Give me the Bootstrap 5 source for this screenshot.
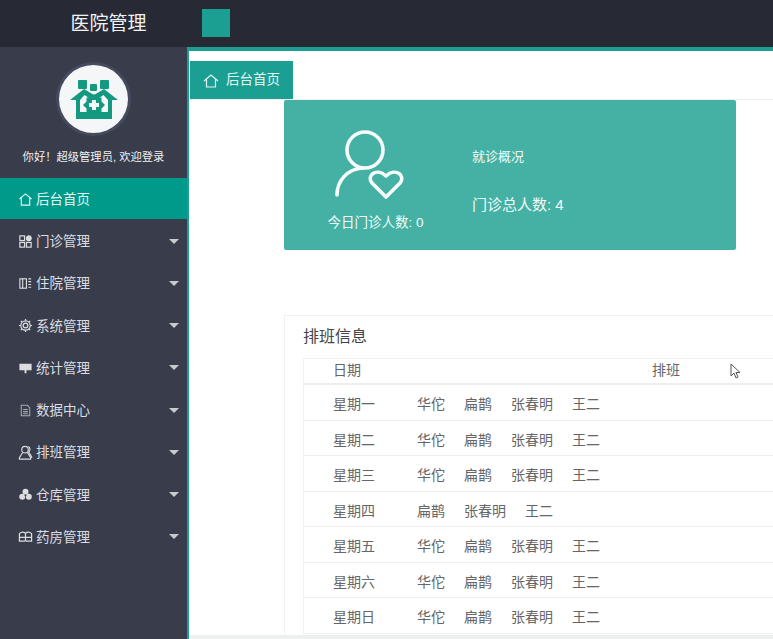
<!DOCTYPE html>
<html lang="zh">
<head>
<meta charset="utf-8">
<title>医院管理</title>
<link href="https://cdn.jsdelivr.net/npm/bootstrap@5.3.0/dist/css/bootstrap.min.css" rel="stylesheet">
<style>
html,body{height:639px;overflow:hidden;}
body{font-family:"Liberation Sans","Noto Sans CJK SC",sans-serif;font-size:14px;background:#fff;}
.shell{width:773px;height:639px;overflow:hidden;}
.topbar{height:47px;background:#272a35;flex:none;padding-bottom:1px;}
.brand{width:187px;color:#f1f2f3;font-size:19px;padding-left:30px;text-align:center;line-height:45px;}
.tsquare{width:28px;height:28px;background:#1a9f92;margin-left:15px;}
.lower{height:592px;}
.side{width:189px;flex:none;background:#393c4a;border-right:2px solid #1a9f92;color:#dfe0e4;}
.avatar-zone{height:131px;padding-top:15px;}
.avatar{width:75px;height:74px;border-radius:50%;background:#f5f6f7;border:3px solid #454a5e;}
.hello{font-size:11.3px;color:#eef0f2;margin-top:13px;line-height:16px;white-space:nowrap;}
.mitem{height:42.25px;padding-left:18px;padding-right:8px;padding-top:4px;font-size:13.5px;color:#dcdde1;}
.mitem.on{height:41px;background:#009a8a;color:#e3f5f2;}
.mitem svg{width:15px;height:15px;margin-right:3px;margin-bottom:2px;flex:none;}
.caret-d{width:0;height:0;margin-bottom:2px;border-left:5.5px solid transparent;border-right:5.5px solid transparent;border-top:5px solid #c9cad0;}
.main{min-width:0;border-top:4px solid #1a9f92;position:relative;}
.tabrow{height:49px;padding-top:10px;padding-left:1px;border-bottom:1px solid #eef0f0;}
.tab{width:103px;height:38px;padding-top:1px;background:#1a9f92;color:#e6f6f4;font-size:13.5px;}
.tab svg{width:16px;height:16px;margin-right:7px;}
.panel{margin-left:95px;width:452px;height:150px;background:#44b1a4;border-radius:2px;color:#f2fbfa;}
.pleft{width:179px;padding-top:30px;font-size:13.5px;line-height:20px;}
.pleft svg{width:72px;height:72px;display:block;margin:0 0 11px 51px;}
.pright{padding-left:9px;padding-top:48px;}
.pright .t1{font-size:13px;line-height:18px;margin-bottom:29px;}
.pright .t2{font-size:15px;line-height:20px;}
.sched{margin-left:95px;margin-top:65px;border:1px solid #f1f1f1;border-right:0;border-bottom:0;padding:0 0 0 18px;color:#555;height:330px;}
.stitle{font-size:16px;line-height:20px;padding-top:11px;height:42px;color:#444;}
.stable{font-size:14px;color:#666;}
.thr{height:27px;border:1px solid #f2f2f2;border-bottom:2px solid #eee;border-right:0;padding-left:29px;line-height:22px;position:relative;}
.thr .dt{width:319px;}
.trw{height:35.5px;border-bottom:1px solid #efefef;border-left:1px solid #f2f2f2;padding-left:29px;padding-top:5px;align-items:center;}
.trw .dt{width:84px;}
.trw .nm{margin-right:19px;}
.ptr{position:absolute;left:426px;top:4px;width:12px;height:16px;}
.footline{position:absolute;left:0;right:0;bottom:0;height:4px;background:#eef0f0;}
</style>
</head>
<body>
<div class="shell d-flex flex-column">
  <div class="topbar d-flex align-items-center">
    <div class="brand">医院管理</div>
    <div class="tsquare"></div>
  </div>
  <div class="lower d-flex">
    <div class="side">
      <div class="avatar-zone text-center">
        <div class="avatar mx-auto d-flex align-items-center justify-content-center">
          <svg width="48" height="39" viewBox="0 0 48 39" fill="#12997f">
            <rect x="8" y="0" width="9" height="9" rx="1"/><rect x="30" y="0" width="9" height="9" rx="1"/><rect x="20" y="4" width="7" height="7" rx="1"/>
            <path d="M0 20 14 9l10 6 10-6 14 11h-6v19H6V20z"/>
            <path d="M10 20l4.500-5 4.500 3v14h-9zM38 20l-4.500-5-4.500 3v14h9z" fill="#f5f6f7"/>
            <path d="M24 14l3.500 3.500h4v4L35 25l-3.500 3.500v4h-4L24 36l-3.500-3.500h-4v-4L13 25l3.500-3.500v-4h4z"/>
            <path d="M22 20h4v3h3v4h-3v3h-4v-3h-3v-4h3z" fill="#f5f6f7"/>
          </svg>
        </div>
        <div class="hello">你好！超级管理员, 欢迎登录</div>
      </div>
      <div class="mitem on d-flex align-items-center"><svg viewBox="0 0 16 16" fill="none" stroke="currentColor" stroke-width="1.2"><path d="M1.5 7.5 8 2l6.500 5.500M3.500 6.500V14h9V6.500"/></svg>后台首页</div>
      <div class="mitem d-flex align-items-center"><svg viewBox="0 0 16 16" fill="none" stroke="currentColor" stroke-width="1.300"><rect x="2" y="2" width="5" height="5"/><rect x="2" y="9" width="5" height="5"/><rect x="9" y="9" width="5" height="5"/><circle cx="11.500" cy="4.500" r="2.500" fill="currentColor"/></svg>门诊管理<span class="caret-d ms-auto"></span></div>
      <div class="mitem d-flex align-items-center"><svg viewBox="0 0 16 16" fill="none" stroke="currentColor" stroke-width="1.200"><rect x="2" y="3" width="7" height="10"/><path d="M5 3v10M11 3h3M11 6h3M11 9h3M11 12h3"/></svg>住院管理<span class="caret-d ms-auto"></span></div>
      <div class="mitem d-flex align-items-center"><svg viewBox="0 0 16 16" fill="none" stroke="currentColor" stroke-width="1.300"><circle cx="8" cy="8" r="2.500"/><circle cx="8" cy="8" r="5"/><path d="M8 1v2M8 13v2M1 8h2M13 8h2M3 3l1.500 1.500M11.500 11.500 13 13M13 3l-1.500 1.500M4.500 11.500 3 13"/></svg>系统管理<span class="caret-d ms-auto"></span></div>
      <div class="mitem d-flex align-items-center"><svg viewBox="0 0 16 16" fill="currentColor"><path d="M1.500 4h13v7H9v3H7v-3H1.500z"/></svg>统计管理<span class="caret-d ms-auto"></span></div>
      <div class="mitem d-flex align-items-center"><svg viewBox="0 0 16 16" fill="none" stroke="#a9abb3" stroke-width="1.100"><path d="M3.500 2.500h6.500l2.500 2.500v8.500h-9zM5.500 7h5M5.500 9.200h5M5.500 11.400h5"/></svg>数据中心<span class="caret-d ms-auto"></span></div>
      <div class="mitem d-flex align-items-center"><svg viewBox="0 0 16 16" fill="none" stroke="currentColor" stroke-width="1.200"><circle cx="7.500" cy="5" r="3.500"/><path d="M5 8 1.500 13.500V15h12v-1.500L10 8M11 1.500c2 1 2.500 4 .5 6l3.500 6"/></svg>排班管理<span class="caret-d ms-auto"></span></div>
      <div class="mitem d-flex align-items-center"><svg viewBox="0 0 16 16" fill="currentColor"><circle cx="8" cy="5" r="3.200"/><circle cx="4.500" cy="10.500" r="3.200"/><circle cx="11.500" cy="10.500" r="3.200"/><circle cx="8" cy="9" r="1" fill="#393c4a"/></svg>仓库管理<span class="caret-d ms-auto"></span></div>
      <div class="mitem d-flex align-items-center"><svg viewBox="0 0 16 16" fill="none" stroke="currentColor" stroke-width="1.300"><path d="M1.500 13V5c2-2 4.500-2 6.500-.5C10 3 12.500 3 14.500 5v8H9l-1-1-1 1zM8 4.500V12M1 9h14"/></svg>药房管理<span class="caret-d ms-auto"></span></div>
    </div>
    <div class="main flex-grow-1">
      <div class="tabrow"><div class="tab d-flex align-items-center justify-content-center"><svg viewBox="0 0 16 16" fill="none" stroke="currentColor" stroke-width="1.200"><path d="M1 8 8 2l7 6M3.500 6.500V14h9V6.500"/></svg>后台首页</div></div>
      <div class="panel d-flex">
        <div class="pleft">
          <svg viewBox="0 0 72 72" fill="none" stroke="#f6fcfb" stroke-width="3.600" stroke-linecap="round" stroke-linejoin="round"><circle cx="30" cy="20" r="18"/><path d="M2 65c0-14 10-26 26-27"/><path d="M51 67 37 53c-6-7 4-16 14-7 10-9 20 0 14 7z"/></svg>
          <div class="text-center ps-1">今日门诊人数: 0</div>
        </div>
        <div class="pright"><div class="t1">就诊概况</div><div class="t2">门诊总人数: 4</div></div>
      </div>
      <div class="sched">
        <div class="stitle">排班信息</div>
        <div class="stable">
          <div class="thr d-flex"><div class="dt">日期</div><div>排班</div>
            <svg class="ptr" viewBox="0 0 12 16" fill="#fff" stroke="#555" stroke-width="1"><path d="M1 1v12l3-3 2 5 2-1-2-4.500h4z"/></svg>
          </div>
          <div class="trw d-flex"><div class="dt">星期一</div><span class="nm">华佗</span><span class="nm">扁鹊</span><span class="nm">张春明</span><span class="nm">王二</span></div>
          <div class="trw d-flex"><div class="dt">星期二</div><span class="nm">华佗</span><span class="nm">扁鹊</span><span class="nm">张春明</span><span class="nm">王二</span></div>
          <div class="trw d-flex"><div class="dt">星期三</div><span class="nm">华佗</span><span class="nm">扁鹊</span><span class="nm">张春明</span><span class="nm">王二</span></div>
          <div class="trw d-flex"><div class="dt">星期四</div><span class="nm">扁鹊</span><span class="nm">张春明</span><span class="nm">王二</span></div>
          <div class="trw d-flex"><div class="dt">星期五</div><span class="nm">华佗</span><span class="nm">扁鹊</span><span class="nm">张春明</span><span class="nm">王二</span></div>
          <div class="trw d-flex"><div class="dt">星期六</div><span class="nm">华佗</span><span class="nm">扁鹊</span><span class="nm">张春明</span><span class="nm">王二</span></div>
          <div class="trw d-flex"><div class="dt">星期日</div><span class="nm">华佗</span><span class="nm">扁鹊</span><span class="nm">张春明</span><span class="nm">王二</span></div>
        </div>
      </div>
      <div class="footline"></div>
    </div>
  </div>
</div>
<script src="https://cdn.jsdelivr.net/npm/bootstrap@5.3.0/dist/js/bootstrap.bundle.min.js"></script>
</body>
</html>
